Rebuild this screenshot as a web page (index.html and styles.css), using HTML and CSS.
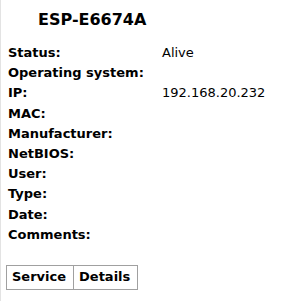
FILE: index.html
```html
<!DOCTYPE html>
<html>
<head>
<meta charset="utf-8">
<link rel="stylesheet" href="styles.css">
</head>
<body>
<div class="page">
  <h1 class="title">ESP-E6674A</h1>
  <div class="info">
    <div class="label">Status:</div><div class="value">Alive</div>
    <div class="label">Operating system:</div><div class="value"></div>
    <div class="label">IP:</div><div class="value">192.168.20.232</div>
    <div class="label">MAC:</div><div class="value"></div>
    <div class="label">Manufacturer:</div><div class="value"></div>
    <div class="label">NetBIOS:</div><div class="value"></div>
    <div class="label">User:</div><div class="value"></div>
    <div class="label">Type:</div><div class="value"></div>
    <div class="label">Date:</div><div class="value"></div>
    <div class="label">Comments:</div><div class="value"></div>
  </div>
  <table class="services">
    <tr><th>Service</th><th>Details</th></tr>
  </table>
</div>
</body>
</html>
```

FILE: styles.css
```css
html, body {
  margin: 0;
  padding: 0;
  background: #ffffff;
}
body {
  font-family: "DejaVu Sans", sans-serif;
  color: #000;
  font-size: 13px;
}
.page {
  border-left: 1px solid #e3e3e3;
  height: 301px;
  box-sizing: border-box;
  padding: 9px 0 0 7px;
}
.title {
  margin: 0 0 0 30px;
  font-size: 16px;
  font-weight: bold;
  line-height: 22px;
}
.info {
  display: grid;
  grid-template-columns: 154px 1fr;
  grid-auto-rows: 20.2px;
  margin-top: 12px;
}
.label {
  font-weight: bold;
  line-height: 20px;
}
.value {
  line-height: 20px;
}
.services {
  border-collapse: collapse;
  border: 1px solid #a0a0a0;
  margin-top: 20px;
  margin-left: -2px;
}
.services th {
  font-weight: bold;
  border: 1px solid #a0a0a0;
  padding: 3px 7px 4px 5px;
  line-height: 16px;
  text-align: left;
}
```
